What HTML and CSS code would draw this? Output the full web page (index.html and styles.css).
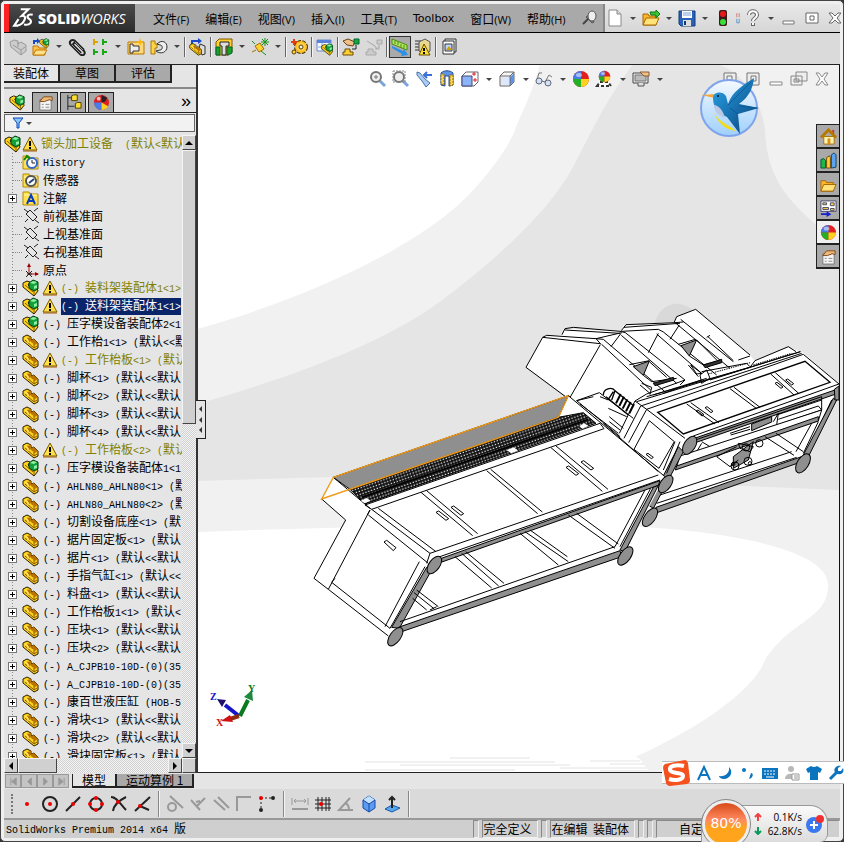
FILE: index.html
```html
<!DOCTYPE html>
<html lang="zh-CN">
<head>
    <meta charset="UTF-8">
    <meta name="viewport" content="width=device-width, initial-scale=1.0">
    <title>SolidWorks Premium 2014</title>
    <link rel="stylesheet" href="styles.css">
</head>
<body>
<!-- shared icons -->
<svg class="sprite" aria-hidden="true">
    <symbol id="part" viewBox="0 0 18 18"><path d="M1 4l4-2 4 2v3l3-1 4 4v5l-4 2L1 8z" fill="#ffd21c" stroke="#2b1d00"/><path d="M9 7l3-1 4 4-3 2-4-3zM5 5l4-1v4L7 9z" fill="#b87400"/><path d="M3 7l9 8v-4M12 15l3-2" fill="none" stroke="#8a5a00"/><path d="M3 5l3 2v3" fill="none" stroke="#fff39a"/></symbol>
    <symbol id="asm" viewBox="0 0 18 18"><path d="M1 4l4-2 3 1-2 3 4 4 5-1 1 3-4 5L1 8z" fill="#ffd21c" stroke="#2b1d00"/><path d="M3 6l8 7M12 16v-4" stroke="#8a5a00" fill="none"/><path d="M7 4l4-3 5 2v7l-4 2-5-3z" fill="#12a03c" stroke="#003d10"/><path d="M8 4l3-2 4 1-3 2zM12 7l3-1v3l-3 1z" fill="#8ff0a0"/></symbol>
    <symbol id="warn" viewBox="0 0 16 16"><path d="M8 1l7 13H1z" fill="#ffe04a" stroke="#7a5a00"/><path d="M7 5h2v5H7zM7 11h2v2H7z" fill="#000"/><path d="M1 15h14" stroke="#a55a00"/></symbol>
    <symbol id="folder" viewBox="0 0 18 18"><path d="M1 3h6l1 2h8v11H1z" fill="#ffe24d" stroke="#b88a00"/><path d="M2 6h13" stroke="#fff8b0"/></symbol>
    <symbol id="plane" viewBox="0 0 18 18"><path d="M8 3l7 7-4 4-7-7zM2 2l4 3M12 4l4-3M3 15l3-3M13 13l4 3" fill="none" stroke="#222"/></symbol>
    <symbol id="origin" viewBox="0 0 18 18"><path d="M7 14V4M7 13h9" stroke="#b01010" fill="none"/><path d="M5 6l2-4 2 4zM13 11l4 2-4 2z" fill="#900"/><path d="M4 10l6 6M10 10l-6 6M5 13h5" stroke="#222"/></symbol>
    <symbol id="ball" viewBox="0 0 18 18"><circle cx="9" cy="9" r="8" fill="#e02020"/><path d="M9 1a8 8 0 0 0-8 8h8z" fill="#4a7ce8"/><path d="M1 9a8 8 0 0 0 8 8V9z" fill="#24b024"/><path d="M9 17a8 8 0 0 0 8-8H9z" fill="#ffd020"/><ellipse cx="7" cy="5" rx="3" ry="2" fill="#fff" opacity=".5"/></symbol>
    <symbol id="hand" viewBox="0 0 18 18"><path d="M3 6h12v11H3z" fill="#f4f4f4" stroke="#777"/><path d="M5 11h2M9 11h4M5 14h2M9 14h4" stroke="#888"/><path d="M3 8l4-5h9v4l-3-1-5 2z" fill="#f2b878" stroke="#7a4a1a"/></symbol>
    <symbol id="open" viewBox="0 0 18 18"><path d="M1 5h5l1 2h7v9H1z" fill="#ffb62a" stroke="#a86600"/><path d="M1 16l3-7h13l-3 7z" fill="#ffe27a" stroke="#a86600"/></symbol>
    <symbol id="lens" viewBox="0 0 18 18"><path d="M11 11l5 5" stroke="#7ba4dc" stroke-width="3"/><circle cx="7" cy="7" r="5" fill="#eee" stroke="#777" stroke-width="2"/></symbol>
    <symbol id="cube" viewBox="0 0 18 18"><path d="M2 6l4-4h10v10l-4 4H2z" fill="#f7f7f7" stroke="#666"/><path d="M3 7h8v8H3z" fill="#dfe8fb"/><path d="M12 7l4-4v9l-4 3z" fill="#5c94ec"/><path d="M2 6h10v10M12 6l4-4" fill="none" stroke="#666"/></symbol>
</svg>

<div class="window">
    <header class="titlebar">
        <h1 class="brand">
            <svg class="ds" viewBox="0 0 22 20"><path d="M8 2h7l-6 6c6-1 2 8-4 9H2l4-6M19 7c-5-1-6 2-3 4s1 6-5 5" fill="none" stroke="#fff" stroke-width="2"/></svg>
            <b>SOLID</b><i>WORKS</i>
        </h1>
        <nav class="menu">
            <a href="#">文件<span>(F)</span></a>
            <a href="#">编辑<span>(E)</span></a>
            <a href="#">视图<span>(V)</span></a>
            <a href="#">插入<span>(I)</span></a>
            <a href="#">工具<span>(T)</span></a>
            <a href="#" class="latin">Toolbox</a>
            <a href="#">窗口<span>(W)</span></a>
            <a href="#">帮助<span>(H)</span></a>
            <svg class="pin" viewBox="0 0 16 16"><path d="M1 14l5-5" stroke="#444" stroke-width="2"/><path d="M4 7l6 6 2-1-1-3-4-4z" fill="#888" stroke="#555"/><ellipse cx="10" cy="6" rx="4" ry="5" fill="#eee" stroke="#555"/></svg>
        </nav>
        <div class="title-actions">
            <button class="tool" aria-label="New"><svg viewBox="0 0 18 18"><path d="M3 1h8l4 4v12H3z" fill="#fff" stroke="#888"/><path d="M11 1v4h4" fill="#ddd" stroke="#888"/></svg></button>
            <button class="drop" aria-label="New options"></button>
            <button class="tool" aria-label="Open"><svg viewBox="0 0 18 18"><use href="#open"/><path d="M8 3h6V1l4 4-4 4V6H9z" fill="#3cc43c" stroke="#0a7a0a"/></svg></button>
            <button class="drop" aria-label="Open options"></button>
            <button class="tool" aria-label="Save"><svg viewBox="0 0 18 18"><path d="M1 2h16v15H3l-2-2z" fill="#2a62b8" stroke="#123a7a"/><path d="M4 2h10v7H4z" fill="#fff"/><path d="M5 4h8M5 6h8" stroke="#7aa0dc"/><path d="M5 11h8v6H5z" fill="#ddd"/><path d="M6 12h2v4H6z" fill="#123a7a"/></svg></button>
            <button class="drop" aria-label="Save options"></button>
            <button class="tool" aria-label="Rebuild"><svg viewBox="0 0 18 18"><rect x="5" y="1" width="8" height="16" rx="2" fill="#3a1a1a"/><circle cx="9" cy="5" r="3" fill="#e81818"/><circle cx="9" cy="13" r="3" fill="#38e038"/></svg></button>
            <svg class="mini" viewBox="0 0 5 14"><path d="M1 1v5M4 1v5" stroke="#c66"/><path d="M1 8v5h3V8" fill="none" stroke="#48c"/></svg>
            <button class="tool" aria-label="Help"><svg viewBox="0 0 18 18"><path d="M5 6c0-5 8-5 8 0 0 3-4 3-4 6M9 14v3" fill="none" stroke="#666" stroke-width="4"/><path d="M5 6c0-5 8-5 8 0 0 3-4 3-4 6M9 14v2" fill="none" stroke="#fff" stroke-width="2"/></svg></button>
            <button class="drop" aria-label="Help options"></button>
            <button class="tool" aria-label="Minimize"><svg viewBox="0 0 18 18"><path d="M3 12h11v3H3z" fill="#fff" stroke="#777"/></svg></button>
            <button class="tool" aria-label="Restore"><svg viewBox="0 0 18 18"><path d="M3 4h12v10H3zM7 7h4v4H7z" fill="#fff" stroke="#666"/></svg></button>
            <button class="tool" aria-label="Close"><svg viewBox="0 0 18 18"><path d="M3 4h3l3 3 3-3h3l-4 5 4 5h-3l-3-3-3 3H3l4-5z" fill="#fff" stroke="#666"/></svg></button>
        </div>
    </header>

    <div class="toolbar">
        <button class="tool" aria-label="Edit component"><svg viewBox="0 0 18 18"><path d="M1 4l4-2 4 1v3l3-2 5 3v6l-5 4L2 9z" fill="#ccc" stroke="#999"/><path d="M4 7l8 5 4-3M9 4v5M12 12v4" stroke="#999" fill="none"/></svg></button>
        <button class="tool" aria-label="Insert component"><svg viewBox="0 0 18 18"><path d="M1 8h5l1 2h6v7H1z" fill="#ffc04a" stroke="#c07800"/><path d="M1 17l3-5h11l-3 5z" fill="#ffe08a" stroke="#c07800"/><path d="M2 6V3h4" stroke="#1a4ac8" stroke-width="2" fill="none"/><path d="M5 0l3 3-3 3z" fill="#1a4ac8"/><use href="#asm" x="7" y="0" width="11" height="11"/></svg></button>
        <button class="drop" aria-label="Insert options"></button>
        <button class="tool" aria-label="Mate"><svg viewBox="0 0 18 18"><path d="M16 12L7 3C4 0 0 4 3 7l9 9c3 3 6 0 4-3L8 5C6 4 4 6 6 8l7 7" fill="none" stroke="#222" stroke-width="2"/><path d="M15 12L7 4M4 7l9 9" stroke="#999"/></svg></button>
        <button class="tool" aria-label="Linear pattern"><svg viewBox="0 0 18 18"><g fill="none" stroke-width="2"><path d="M3 1v6M3 4h4" stroke="#d8a800"/><path d="M3 11v6M3 14h4M12 1v6M12 4h4M12 11v6M12 14h4" stroke="#18a818"/></g></svg></button>
        <button class="drop" aria-label="Pattern options"></button>
        <button class="tool" aria-label="Smart fasteners"><svg viewBox="0 0 18 18"><path d="M1 4h16v12H1z" fill="#ffd878" stroke="#b87800"/><path d="M3 6h3v2h6v5H6v2H3z" fill="#eee" stroke="#333"/><path d="M13 0l1 3 3 1-3 1-1 3-1-3-3-1 3-1z" fill="#ffb800"/></svg></button>
        <button class="tool" aria-label="Move component"><svg viewBox="0 0 18 18"><path d="M1 3h4v3h2v4H5v6H1z" fill="#ffd44a" stroke="#a87800"/><path d="M7 6c5-5 10-2 10 3s-6 8-11 4l4-1c3 0 3-5 0-5z" fill="#eee" stroke="#333"/></svg></button>
        <button class="drop" aria-label="Move options"></button>
        <div class="sep"></div>
        <button class="tool" aria-label="Show hidden components"><svg viewBox="0 0 18 18"><path d="M3 6V3h7" stroke="#1a4ac8" stroke-width="2" fill="none"/><path d="M9 0l4 3-4 3z" fill="#1a4ac8"/><path d="M11 6l5 2v8l-3 1-3-5z" fill="#ddd" stroke="#333"/><use href="#part" x="0" y="4" width="14" height="14"/></svg></button>
        <div class="sep"></div>
        <button class="tool" aria-label="Assembly features"><svg viewBox="0 0 18 18"><path d="M1 4l3-3h13v13l-4 3H1z" fill="#ffd030" stroke="#7a5a00"/><path d="M1 9h4v8H1zM12 9h5v6l-4 2h-1z" fill="#18a028" stroke="#063"/><path d="M5 4h9v4h-3v9H7V8H5z" fill="#ddd" stroke="#222"/></svg></button>
        <button class="drop" aria-label="Feature options"></button>
        <button class="tool" aria-label="Reference geometry"><svg viewBox="0 0 18 18"><path d="M4 8l5-3 4 6-5 3z" fill="#ffd030" stroke="#a07000"/><path d="M1 3l3 3M10 13l5 4" stroke="#169016"/><path d="M14 0v8M10 4h8M11 1l6 6M17 1l-6 6" stroke="#169016"/><path d="M1 14l4-2" stroke="#a07000"/></svg></button>
        <button class="drop" aria-label="Reference options"></button>
        <div class="sep"></div>
        <button class="tool" aria-label="New motion study"><svg viewBox="0 0 18 18"><circle cx="11" cy="9" r="5" fill="none" stroke="#4a3400" stroke-width="4" stroke-dasharray="3 1"/><circle cx="11" cy="9" r="5" fill="#ffd050" stroke="#ffc020" stroke-width="2"/><circle cx="11" cy="9" r="2" fill="#eee" stroke="#5a4000"/><circle cx="4" cy="14" r="2" fill="#ffd030" stroke="#5a4000"/><path d="M1 4h6M4 1v6" stroke="#e04010" stroke-width="2"/></svg></button>
        <div class="sep"></div>
        <button class="tool" aria-label="Bill of materials"><svg viewBox="0 0 18 18"><path d="M1 2h14v11H1z" fill="#f4f8ff" stroke="#6a8ad0"/><path d="M1 2h14v3H1z" fill="#5a82dc"/><path d="M2 9h12M6 5v8" stroke="#8aa4dc"/><use href="#asm" x="5" y="5" width="13" height="13"/></svg></button>
        <div class="sep"></div>
        <button class="tool" aria-label="Exploded view"><svg viewBox="0 0 18 18"><path d="M1 3l5-2 7 3-2 4-6-1z" fill="#f0c088" stroke="#6a4010"/><path d="M12 1h5v5h-5z" fill="#18a838" stroke="#063"/><path d="M3 11h5v3h3v3H1v-3h2z" fill="#ffd030" stroke="#6a4a00"/><path d="M14 7v4h-4" fill="none" stroke="#222"/></svg></button>
        <button class="tool" aria-label="Explode line sketch"><svg viewBox="0 0 18 18"><path d="M2 3l8 5 2 3M12 2h5v4h-5zM3 11h5v3h3v3H1v-3h2zM14 7v4h-4" fill="#ccc" stroke="#aaa"/></svg></button>
        <div class="sep"></div>
        <button class="tool pressed" aria-label="Instant3D"><svg viewBox="0 0 18 18"><path d="M1 1l15 6v5L1 6z" fill="#b4e860" stroke="#4a8a10"/><path d="M4 3v3M7 4v3M10 6v3M13 7v3" stroke="#4a8a10"/><path d="M1 8l11 5 1-2 4 6-7 1 1-2L1 10z" fill="#2a90e8"/></svg></button>
        <button class="tool" aria-label="Large assembly mode"><svg viewBox="0 0 18 18"><path d="M1 3h6M1 6h6M1 9h6M1 12h6" stroke="#333"/><path d="M5 4l6-3 5 3v9l-5 3-6-3z" fill="#e8d890" stroke="#555"/><path d="M10 6l6 11H5z" fill="#ffe030" stroke="#6a5000"/><path d="M10 10v3M10 14v2" stroke="#000" stroke-width="2"/></svg></button>
        <div class="sep"></div>
        <button class="tool" aria-label="Update holders"><svg viewBox="0 0 18 18"><path d="M5 1h11v13H5z" fill="#eee" stroke="#333"/><path d="M3 3h11v13H3z" fill="#fff" stroke="#333"/><path d="M5 6h7v7H5z" fill="#bcd4ff" stroke="#333"/><path d="M6 12l3-4 3 4z" fill="#d0a000"/></svg></button>
    </div>

    <main class="workspace">
        <aside class="panel">
            <div class="command-tabs">
                <button class="active">装配体</button>
                <button>草图</button>
                <button>评估</button>
            </div>
            <div class="manager-tabs">
                <button class="active" aria-label="FeatureManager"><svg viewBox="0 0 18 18"><use href="#asm"/></svg></button>
                <button aria-label="PropertyManager"><svg viewBox="0 0 18 18"><use href="#hand"/></svg></button>
                <button aria-label="ConfigurationManager"><svg viewBox="0 0 18 18"><path d="M3 1v16M3 4h4M3 13h7" stroke="#222" fill="none"/><path d="M7 2l2-1h4v6H7zM11 10l2-1h4v6h-6z" fill="#ffe030" stroke="#4a3a00"/></svg></button>
                <button aria-label="DisplayManager"><svg viewBox="0 0 18 18"><circle cx="9" cy="9" r="8" fill="#e02020"/><path d="M9 1l6 3-2 4-4 1z" fill="#222"/><path d="M1 9a8 8 0 0 0 8 8V9z" fill="#4a7ce8"/><path d="M9 17a8 8 0 0 0 7-4l-7-4z" fill="#ffd020"/><ellipse cx="6" cy="5" rx="2" ry="2" fill="#fff" opacity=".7"/></svg></button>
                <span class="more">»</span>
            </div>
            <label class="filter">
                <svg viewBox="0 0 12 12"><path d="M1 1h10L7 6v5H5V6z" fill="#8cc4f8" stroke="#0a48b8"/></svg>
                <span class="caret"></span>
                <input type="text" aria-label="Filter">
            </label>
            <div class="tree-frame">
                <div class="tree">
                    <div class="row root"><svg><use href="#asm"/></svg><svg class="warn"><use href="#warn"/></svg><a class="label olive" href="#">锁头加工设备<span>  (</span>默认<span>&lt;</span>默认</a></div>
                    <div class="children">
                        <div class="row"><em></em><svg viewBox="0 0 18 18"><use href="#folder"/><circle cx="10" cy="10" r="5" fill="#fff" stroke="#36c" stroke-width="2"/><path d="M10 7v3h3" stroke="#222" fill="none"/><path d="M2 7l3-4 3 3" stroke="#180" stroke-width="2" fill="none"/></svg><a class="label" href="#"><span>History</span></a></div>
                        <div class="row"><em></em><svg viewBox="0 0 18 18"><use href="#folder"/><circle cx="9" cy="10" r="5" fill="#fff" stroke="#555" stroke-width="2"/><path d="M7 12l5-4" stroke="#247" stroke-width="2"/></svg><a class="label" href="#">传感器</a></div>
                        <div class="row"><button></button><svg viewBox="0 0 18 18"><use href="#folder"/><path d="M5 15l4-9 4 9M6 12h6" fill="none" stroke="#0a3cc0" stroke-width="2"/></svg><a class="label" href="#">注解</a></div>
                        <div class="row"><em></em><svg><use href="#plane"/></svg><a class="label" href="#">前视基准面</a></div>
                        <div class="row"><em></em><svg><use href="#plane"/></svg><a class="label" href="#">上视基准面</a></div>
                        <div class="row"><em></em><svg><use href="#plane"/></svg><a class="label" href="#">右视基准面</a></div>
                        <div class="row"><em></em><svg><use href="#origin"/></svg><a class="label" href="#">原点</a></div>
                        <div class="row"><button></button><svg><use href="#asm"/></svg><svg class="warn"><use href="#warn"/></svg><a class="label olive" href="#"><span>(-) </span>装料架装配体<span>1&lt;1&gt;</span></a></div>
                        <div class="row"><button></button><svg><use href="#asm"/></svg><svg class="warn"><use href="#warn"/></svg><a class="label selected" href="#"><span>(-) </span>送料架装配体<span>1&lt;1&gt;</span></a></div>
                        <div class="row"><button></button><svg><use href="#asm"/></svg><a class="label" href="#"><span>(-) </span>压字模设备装配体<span>2&lt;1</span></a></div>
                        <div class="row"><button></button><svg><use href="#part"/></svg><a class="label" href="#"><span>(-) </span>工作枱<span>1&lt;1&gt; (</span>默认<span>&lt;&lt;</span>默</a></div>
                        <div class="row"><button></button><svg><use href="#part"/></svg><svg class="warn"><use href="#warn"/></svg><a class="label olive" href="#"><span>(-) </span>工作枱板<span>&lt;1&gt; (</span>默认</a></div>
                        <div class="row"><button></button><svg><use href="#part"/></svg><a class="label" href="#"><span>(-) </span>脚杯<span>&lt;1&gt; (</span>默认<span>&lt;&lt;</span>默认</a></div>
                        <div class="row"><button></button><svg><use href="#part"/></svg><a class="label" href="#"><span>(-) </span>脚杯<span>&lt;2&gt; (</span>默认<span>&lt;&lt;</span>默认</a></div>
                        <div class="row"><button></button><svg><use href="#part"/></svg><a class="label" href="#"><span>(-) </span>脚杯<span>&lt;3&gt; (</span>默认<span>&lt;&lt;</span>默认</a></div>
                        <div class="row"><button></button><svg><use href="#part"/></svg><a class="label" href="#"><span>(-) </span>脚杯<span>&lt;4&gt; (</span>默认<span>&lt;&lt;</span>默认</a></div>
                        <div class="row"><button></button><svg><use href="#part"/></svg><svg class="warn"><use href="#warn"/></svg><a class="label olive" href="#"><span>(-) </span>工作枱板<span>&lt;2&gt; (</span>默认</a></div>
                        <div class="row"><button></button><svg><use href="#asm"/></svg><a class="label" href="#"><span>(-) </span>压字模设备装配体<span>1&lt;1</span></a></div>
                        <div class="row"><button></button><svg><use href="#part"/></svg><a class="label" href="#"><span>(-) AHLN80_AHLN80&lt;1&gt; (</span>默</a></div>
                        <div class="row"><button></button><svg><use href="#part"/></svg><a class="label" href="#"><span>(-) AHLN80_AHLN80&lt;2&gt; (</span>默</a></div>
                        <div class="row"><button></button><svg><use href="#part"/></svg><a class="label" href="#"><span>(-) </span>切割设备底座<span>&lt;1&gt; (</span>默</a></div>
                        <div class="row"><button></button><svg><use href="#part"/></svg><a class="label" href="#"><span>(-) </span>据片固定板<span>&lt;1&gt; (</span>默认</a></div>
                        <div class="row"><button></button><svg><use href="#part"/></svg><a class="label" href="#"><span>(-) </span>据片<span>&lt;1&gt; (</span>默认<span>&lt;&lt;</span>默认</a></div>
                        <div class="row"><button></button><svg><use href="#part"/></svg><a class="label" href="#"><span>(-) </span>手指气缸<span>&lt;1&gt; (</span>默认<span>&lt;&lt;</span></a></div>
                        <div class="row"><button></button><svg><use href="#part"/></svg><a class="label" href="#"><span>(-) </span>料盘<span>&lt;1&gt; (</span>默认<span>&lt;&lt;</span>默认</a></div>
                        <div class="row"><button></button><svg><use href="#part"/></svg><a class="label" href="#"><span>(-) </span>工作枱板<span>1&lt;1&gt; (</span>默认<span>&lt;</span></a></div>
                        <div class="row"><button></button><svg><use href="#part"/></svg><a class="label" href="#"><span>(-) </span>压块<span>&lt;1&gt; (</span>默认<span>&lt;&lt;</span>默认</a></div>
                        <div class="row"><button></button><svg><use href="#part"/></svg><a class="label" href="#"><span>(-) </span>压块<span>&lt;2&gt; (</span>默认<span>&lt;&lt;</span>默认</a></div>
                        <div class="row"><button></button><svg><use href="#part"/></svg><a class="label" href="#"><span>(-) A_CJPB10-10D-(0)(35</span></a></div>
                        <div class="row"><button></button><svg><use href="#part"/></svg><a class="label" href="#"><span>(-) A_CJPB10-10D-(0)(35</span></a></div>
                        <div class="row"><button></button><svg><use href="#part"/></svg><a class="label" href="#"><span>(-) </span>康百世液压缸<span> (HOB-5</span></a></div>
                        <div class="row"><button></button><svg><use href="#part"/></svg><a class="label" href="#"><span>(-) </span>滑块<span>&lt;1&gt; (</span>默认<span>&lt;&lt;</span>默认</a></div>
                        <div class="row"><button></button><svg><use href="#part"/></svg><a class="label" href="#"><span>(-) </span>滑块<span>&lt;2&gt; (</span>默认<span>&lt;&lt;</span>默认</a></div>
                        <div class="row"><button></button><svg><use href="#part"/></svg><a class="label" href="#"><span>(-) </span>滑块固定板<span>&lt;1&gt; (</span>默认</a></div>
                    </div>
                </div>
                <div class="vscroll"><button class="up" aria-label="Scroll up"></button><div class="thumb"></div><div class="track"></div><button class="down" aria-label="Scroll down"></button></div>
                <div class="hscroll"><button class="left" aria-label="Scroll left"></button><div class="thumb"></div><div class="track"></div><button class="right" aria-label="Scroll right"></button></div>
                <div class="corner"></div>
            </div>
        </aside>

        <section class="viewport">
            <svg class="scene" viewBox="198 65 641 708" preserveAspectRatio="xMinYMin slice">
                <defs>
                    <pattern id="rollers" width="9" height="9" patternUnits="userSpaceOnUse" patternTransform="rotate(-19)"><path d="M0 0h9v9H0z" fill="#111"/><path d="M2 2h4v4H2z" fill="#eee"/></pattern>
                </defs>
                <!-- backdrop bands -->
                <path d="M197 64h644v711H197z" fill="#fff"/>
                <path d="M197 329C322 294 404 248 445 216S512 140 515 130 530 100 540 64H841V775H652C640 760 640 757 635 757 700 728 754 690 765 660 790 620 828 620 828 585 828 545 703 530 640 527L363 527Q280 529 197 532z" fill="#f1f1f1"/>
                <path d="M197 404C300 375 390 340 445 298S550 210 573 167 600 110 633 64H718C750 76 763 110 765 130 767 190 800 210 841 246V490L743 486 332 477 197 481z" fill="#e5e5e5"/>
                <path d="M653 330C658 295 694 295 706 330z" fill="#d9d9d9"/>
                <path d="M365 762h190M400 765h170M450 758h80M365 770h150M500 774h80M560 768h90M590 761h50M610 764h50M600 771h50" stroke="#f1f1f1" stroke-width="2"/>
                <!-- rear machine and cabinet -->
                <g transform="translate(520 300) scale(.33333)" fill="none" stroke="#000" stroke-width="3">
                    <path d="M18 202L68 110 126 104 132 86 303 94 312 74 462 66 470 50 527 28 690 165 703 182 805 142 850 158 957 252 850 480 405 640 300 405 150 296z" fill="#fff" stroke="none"/>
                    <path d="M18 202L68 112 80 106 228 116 250 118M68 112L240 131M241 134L148 296M18 202L150 300"/>
                    <path d="M250 118L435 275M245 133L392 270M228 116L243 133M228 116L305 98"/>
                    <path d="M126 104L135 86 160 82 300 94 316 98M135 90L300 100M303 100L273 140M316 98L495 240M304 106L470 250"/>
                    <path d="M304 92L318 74 465 68 490 66M312 82L480 70M305 94L415 88 430 96M415 100L385 158M430 96L590 225M410 102L545 220" />
                    <path d="M463 66L470 50 527 28 690 165M463 66L630 205M482 58L640 185M478 75L450 118M560 112L570 106M564 110L640 182M655 180L690 168"/>
                    <path d="M340 200L388 183 370 226zM483 137L530 120 508 168z" fill="#8f8f8f"/>
                    <path d="M328 194L388 182M475 133L526 118M370 226L395 245 470 235M508 168L550 195 605 180M388 185L440 232M530 120L590 180"/>
                    <path d="M400 250L460 232 462 240 405 257zM550 195L605 178 605 188 555 203z" fill="#333"/>
                    <path d="M360 255L390 280M365 250L395 262 390 284M505 195L535 230M512 195L545 220 530 222zM540 225L560 210 570 235 545 250zM495 240L480 255M545 215L680 190 690 200"/>
                    <path d="M345 303L380 282 495 240M380 290L690 202 705 182 805 140 828 155M430 280L545 240M570 240L840 155M400 285L560 235"/>
                    <path d="M565 222L690 188M700 195L815 160" stroke-dasharray="4 3"/>
                    <path d="M380 328L850 163 957 252 520 408M380 328L495 415M350 305L842 155M362 318L845 160M345 303L380 328"/>
                    <path d="M413 337L855 184 930 247 490 402z" stroke-width="4"/>
                    <path d="M500 312L585 372M512 308L597 368M630 266L710 326M642 262L720 322M752 222L822 285M766 218L836 280"/>
                    <path d="M528 333l6-3 18 14-6 4zM555 323l6-3 18 14-6 4zM765 250l6-3 18 14-6 4zM797 240l6-3 18 14-6 4z"/>
                    <path d="M345 303L298 400M362 318L312 415M380 328L326 428M388 362L463 425 417 505 342 448zM378 463l6-3 16 12-6 4z"/>
                    <path d="M523 415L945 270 948 282 526 428z" fill="#8f8f8f"/>
                    <path d="M520 422L905 290 905 330 545 450M545 430L530 455M545 425L570 440M760 365L775 340 770 375M775 358L895 318 905 330M770 345L905 300"/>
                    <path d="M480 468L905 330 895 362 470 500z" fill="#fff"/>
                    <path d="M470 498L895 350V363L466 510z" fill="#8f8f8f"/>
                    <path d="M695 372L755 350 755 366 695 392zM640 470L700 425 685 480 640 505z" fill="#8f8f8f"/>
                    <path d="M590 470L630 500 655 480M590 470L650 440M630 400L690 380M632 405L690 388M655 430L700 440 690 455 660 445z"/>
                    <circle cx="645" cy="498" r="12"/><circle cx="684" cy="484" r="12"/><circle cx="678" cy="442" r="11"/><circle cx="718" cy="430" r="11"/><circle cx="640" cy="492" r="5"/><circle cx="690" cy="490" r="5"/>
                    <path d="M735 410L822 466M768 400L850 455M420 585L815 455M410 610L830 472M895 365L850 460M875 370L828 455M935 300L895 385"/>
                    <path d="M408 622L845 470 840 487 405 640zM940 295L950 300 865 470 850 465zM475 440L490 455 400 625 385 615z" fill="#8f8f8f"/>
                    <path d="M480 425L440 520M465 425L430 510"/>
                    <path d="M943 268L957 258V300L945 300z" fill="#8f8f8f"/>
                    <ellipse cx="509" cy="436" rx="17" ry="30" transform="rotate(32 509 436)" fill="#8f8f8f"/>
                    <ellipse cx="849" cy="490" rx="17" ry="32" transform="rotate(32 849 490)" fill="#8f8f8f"/>
                    <path d="M170 302L238 278 340 355M170 302L300 410M180 312L295 400M240 290L265 300M265 325L320 350M268 365L300 390M268 350L310 385"/>
                    <path d="M250 285C250 265 275 260 285 272L338 315M258 290L325 345M265 298L280 275M285 272L275 300" stroke-width="4"/>
                    <path d="M288 310L302 282M298 318L312 290M308 326L322 298M318 334L332 306M328 340L342 312" stroke-width="6"/>
                </g>
                <!-- front bench -->
                <g transform="translate(310 380) scale(.33333)" fill="none" stroke="#000" stroke-width="3">
                    <path d="M35 357L70 292 775 47 880 130 1065 290 940 525 240 770 55 628 12 595 107 420z" fill="#fff" stroke="none"/>
                    <path d="M35 357L107 420 12 595 55 628 180 390M70 292L180 385"/>
                    <path d="M120 328L745 112 820 98 858 130 165 372z" fill="url(#rollers)"/>
                    <path d="M155 352L835 118" stroke-width="5"/>
                    <path d="M590 210l22-8 12 10-20 8zM808 138l15-8 12 8-18 8zM152 362l18-8 12 8-18 8z" fill="#fff" stroke="none"/>
                    <path d="M70 292L775 47 745 112 120 328z" fill="#8f8f8f"/>
                    <path d="M70 292L775 47 745 112 35 357z" stroke="#f09a18" stroke-width="4"/>
                    <path d="M165 375L870 130 882 146 185 388zM775 47L1065 290M800 62L850 50M880 130L1045 275"/>
                    <path d="M185 388L360 520M205 385L378 515M175 405L355 550M180 390L172 405"/>
                    <path d="M360 520L1045 285M375 535L1050 300M360 520L350 550"/>
                    <path d="M380 540L1050 302 1045 316 390 548z" fill="#8f8f8f"/>
                    <path d="M333 337L488 467M350 332L503 461M530 272L683 401M542 268L697 396M723 203L877 334M738 198L894 328"/>
                    <path d="M378 397l8-4 30 23-8 5zM423 382l8-4 30 23-8 5zM768 262l8-4 30 23-8 5zM813 246l8-4 30 23-8 5zM222 486l8-5 28 22-8 9z"/>
                    <path d="M65 607L240 745M55 628L235 768M328 545L225 740M345 560L240 745M65 607L75 595"/>
                    <path d="M350 562L362 575 268 745 245 742z" fill="#8f8f8f"/>
                    <path d="M270 725L915 500M320 630L385 680M312 638L372 686M308 655L350 690M467 515L582 610M455 520L566 618M435 530L545 624M645 455L775 545M660 450L772 530M630 460L745 555M775 405L915 505M800 400L925 492M380 680L360 690"/>
                    <path d="M265 742L930 512 935 530 272 756z" fill="#8f8f8f"/>
                    <path d="M1005 330L915 500M1022 325L930 500"/>
                    <path d="M1030 322L1045 316 945 515 930 510z" fill="#8f8f8f"/>
                    <g fill="#8f8f8f">
                        <ellipse cx="373" cy="555" rx="16" ry="30" transform="rotate(36 373 555)"/>
                        <ellipse cx="256" cy="770" rx="16" ry="32" transform="rotate(36 256 770)"/>
                        <ellipse cx="946" cy="528" rx="16" ry="32" transform="rotate(36 946 528)"/>
                        <ellipse cx="1067" cy="312" rx="16" ry="30" transform="rotate(36 1067 312)"/>
                        <ellipse cx="1020" cy="412" rx="16" ry="32" transform="rotate(36 1020 412)"/>
                    </g>
                </g>
                <!-- axis triad -->
                <g stroke-width="4" class="triad">
                    <path d="M239 716L225 705" stroke="#1414c8"/><path d="M217 699l9 1-4 7z" fill="#20106a"/>
                    <path d="M240 716L248 700" stroke="#0a7a20"/><path d="M252 690l1 11-9-4z" fill="#1e8a40"/>
                    <path d="M239 716L230 719" stroke="#8a3010"/><path d="M221 721l9-6 3 7z" fill="#d01010"/>
                    <text x="210" y="700" fill="#1414c8">Z</text><text x="248" y="692" fill="#0a7a20">Y</text><text x="216" y="726" fill="#d01010">X</text>
                </g>
            </svg>

            <div class="view-tools">
                <button class="tool" aria-label="Zoom to fit"><svg viewBox="0 0 18 18"><use href="#lens"/><path d="M5 7h4M7 5v4" stroke="#777"/></svg></button>
                <button class="tool" aria-label="Zoom to area"><svg viewBox="0 0 18 18"><use href="#lens"/><path d="M1 1h12v11H1z" fill="none" stroke="#888" stroke-dasharray="2 1"/></svg></button>
                <button class="tool" aria-label="Previous view"><svg viewBox="0 0 18 18"><path d="M2 2l3 1 5 6 5 4-4 4-4-6-5-6z" fill="#a8ccf4" stroke="#4a72a8"/><path d="M9 5h8M12 2L9 5l3 3" fill="none" stroke="#3a70d8" stroke-width="2"/></svg></button>
                <button class="tool" aria-label="Section view"><svg viewBox="0 0 18 18"><path d="M3 3c3-3 9-3 12 0v12l-4 1V6H7v10l-4-1z" fill="#5c94ec" stroke="#2a4a88"/><path d="M3 4h3v11l-3-1zM12 5h3v10l-3 1z" fill="#ffd850" stroke="#8a6a10" stroke-dasharray="2 1"/></svg></button>
                <button class="tool" aria-label="View orientation"><svg viewBox="0 0 18 18"><path d="M1 6l4-4h12v10l-4 4H1z" fill="#fff" stroke="#667"/><path d="M1 6h10v10H1z" fill="#8cb4f8" stroke="#447"/><path d="M11 4h4M13 2v4M12 10h4M14 8v4" stroke="#e02020"/></svg></button>
                <button class="drop" aria-label="Orientation options"></button>
                <button class="tool" aria-label="Display style"><svg viewBox="0 0 18 18"><use href="#cube"/></svg></button>
                <button class="drop" aria-label="Display options"></button>
                <button class="tool" aria-label="Hide items"><svg viewBox="0 0 18 18"><path d="M2 10L4 3h3M10 12l4-7 3 2" fill="none" stroke="#777"/><circle cx="4" cy="11" r="3" fill="#cfe2f8" stroke="#667"/><circle cx="13" cy="13" r="3" fill="#cfe2f8" stroke="#667"/><path d="M7 11l3 1" stroke="#667"/></svg></button>
                <button class="drop" aria-label="Hide options"></button>
                <button class="tool" aria-label="Edit appearance"><svg viewBox="0 0 18 18"><use href="#ball"/></svg></button>
                <button class="tool" aria-label="Apply scene"><svg viewBox="0 0 18 18"><path d="M2 16l3-4h8l3 4z" fill="#fff" stroke="#333" stroke-dasharray="3 2" stroke-width="2"/><use href="#ball" x="3" y="0" width="13" height="13"/></svg></button>
                <button class="drop" aria-label="Scene options"></button>
                <button class="tool" aria-label="View settings"><svg viewBox="0 0 18 18"><path d="M1 3h15v10H1z" fill="#eee" stroke="#444"/><path d="M3 5h11v6H3z" fill="#bbb" stroke="#777"/><path d="M6 13v3h6v-3" fill="#ddd" stroke="#555"/><path d="M8 2h9v4h-5z" fill="#f2c090" stroke="#8a5a2a"/></svg></button>
                <button class="drop" aria-label="Settings options"></button>
            </div>

            <div class="doc-buttons">
                <button class="tool" aria-label="Tile left"><svg viewBox="0 0 18 18"><path d="M3 3h12v12H3zM6 10V6h5v5z" fill="#eee" stroke="#777"/></svg></button>
                <button class="tool" aria-label="Tile right"><svg viewBox="0 0 18 18"><path d="M3 3h12v12H3zM7 6h5v5H7z" fill="#eee" stroke="#777"/></svg></button>
                <button class="tool" aria-label="Minimize document"><svg viewBox="0 0 18 18"><path d="M3 12h12v3H3z" fill="#fff" stroke="#888"/></svg></button>
                <button class="tool" aria-label="Restore document"><svg viewBox="0 0 18 18"><path d="M6 2h11v9H6zM1 6h11v9H1zM4 9h5v3H4z" fill="#eee" stroke="#888"/></svg></button>
                <button class="tool" aria-label="Close document"><svg viewBox="0 0 18 18"><path d="M3 3h3l3 4 3-4h3l-4 6 4 6h-3l-3-4-3 4H3l4-6z" fill="#fff" stroke="#888"/></svg></button>
            </div>

            <svg class="bird" viewBox="0 0 66 64">
                <defs><linearGradient id="sky" x2="0" y2="1"><stop offset="0" stop-color="#f4f9ff"/><stop offset="1" stop-color="#9fd0fc"/></linearGradient><linearGradient id="wing" x2="1" y2="1"><stop offset="0" stop-color="#2aa4e8"/><stop offset="1" stop-color="#063f78"/></linearGradient></defs>
                <circle cx="32" cy="34" r="28" fill="url(#sky)" stroke="#7fa4ec" stroke-width="2"/>
                <path d="M4 21l14-1v4z" fill="#f4a640"/>
                <path d="M16 24c0-6 9-8 13-2l2 8C35 18 46 11 57 4c-1 10-5 19-15 26l20 4-21 6 2 20L30 43C20 39 16 32 16 24z" fill="url(#wing)"/>
                <path d="M17 31c4 0 9 5 11 13-6-2-11-6-11-13z" fill="#bcc8e4"/>
                <path d="M17 38c4 10 14 12 22 19-10-1-19-8-22-19z" fill="#f2dc18"/>
                <circle cx="21" cy="22" r="1" fill="#012"/>
                <path d="M31 31L54 8M42 32l18 2M41 40l-8-6" fill="none" stroke="#0a5c9c"/>
            </svg>

            <nav class="task-tabs">
                <button aria-label="Resources"><svg viewBox="0 0 18 18"><path d="M13 2h2v5h-2z" fill="#c33"/><path d="M4 9h11v8H4z" fill="#fff2b0" stroke="#a87000"/><path d="M1 10l8-8 8 8" fill="none" stroke="#b87800" stroke-width="3"/><path d="M8 11h3v6H8z" fill="#d89018"/></svg></button>
                <button aria-label="Design library"><svg viewBox="0 0 18 18"><path d="M1 8l3-1 2 2v8H1z" fill="#1cb848" stroke="#053"/><path d="M7 6l3-2 1 2v11H7z" fill="#ffd030" stroke="#740"/><path d="M12 3l3-2 2 2v13l-5 1z" fill="#5ca4f0" stroke="#146"/></svg></button>
                <button aria-label="File explorer"><svg viewBox="0 0 18 18"><use href="#open"/></svg></button>
                <button aria-label="View palette"><svg viewBox="0 0 18 18"><path d="M1 1h16v11H1z" fill="#fff" stroke="#446"/><path d="M3 3h4v2H3zM11 3h4v3h-4zM3 8h6v2H3zM11 9h4v2h-4z" fill="#ffd84a" stroke="#446"/><path d="M1 14h6v-2l5 3-5 3v-2H1z" fill="#1420d0"/></svg></button>
                <button class="active" aria-label="Appearances"><svg viewBox="0 0 18 18"><use href="#ball"/></svg></button>
                <button aria-label="Custom properties"><svg viewBox="0 0 18 18"><use href="#hand"/></svg></button>
            </nav>
            <button class="splitter" aria-label="Collapse panel"><i></i><i></i><i></i></button>
        </section>
    </main>

    <div class="model-tabs">
        <button class="step" aria-label="First"><svg viewBox="0 0 10 10"><path d="M2 1v8M8 1v8L3 5z"/></svg></button>
        <button class="step" aria-label="Previous"><svg viewBox="0 0 10 10"><path d="M7 1v8L3 5z"/></svg></button>
        <button class="step" aria-label="Next"><svg viewBox="0 0 10 10"><path d="M3 1v8l4-4z"/></svg></button>
        <button class="step" aria-label="Last"><svg viewBox="0 0 10 10"><path d="M8 1v8M2 1v8l5-4z"/></svg></button>
        <button class="tab active">模型</button>
        <button class="tab">运动算例 1</button>
    </div>

    <div class="sketchbar">
        <span class="grip"></span>
        <button class="tool" aria-label="Point snap"><svg viewBox="0 0 18 18"><circle cx="9" cy="9" r="2" fill="#e00"/></svg></button>
        <button class="tool" aria-label="Center snap"><svg viewBox="0 0 18 18"><circle cx="9" cy="9" r="7" fill="none" stroke="#222" stroke-width="2"/><circle cx="9" cy="9" r="2" fill="#e00"/></svg></button>
        <button class="tool" aria-label="Midpoint snap"><svg viewBox="0 0 18 18"><path d="M2 16L16 2" stroke="#222" stroke-width="2"/><circle cx="9" cy="9" r="2" fill="#e00"/></svg></button>
        <button class="tool" aria-label="Quadrant snap"><svg viewBox="0 0 18 18"><circle cx="9" cy="9" r="6" fill="none" stroke="#222" stroke-width="2"/><g fill="#e00"><circle cx="9" cy="3" r="2"/><circle cx="9" cy="15" r="2"/><circle cx="3" cy="9" r="2"/><circle cx="15" cy="9" r="2"/></g></svg></button>
        <button class="tool" aria-label="Intersection snap"><svg viewBox="0 0 18 18"><path d="M1 2c6 0 9 7 15 13M16 2C12 4 4 9 3 16" fill="none" stroke="#222" stroke-width="2"/><circle cx="8" cy="7" r="2" fill="#e00"/></svg></button>
        <button class="tool" aria-label="Nearest snap"><svg viewBox="0 0 18 18"><path d="M2 16L17 2M7 11l9 4" stroke="#222" stroke-width="2"/><circle cx="7" cy="11" r="2" fill="#e00"/></svg></button>
        <div class="sep"></div>
        <button class="tool" aria-label="Tangent snap"><svg viewBox="0 0 18 18"><path d="M4 1l13 12" stroke="#999" stroke-width="2"/><circle cx="6" cy="12" r="4" fill="none" stroke="#999" stroke-width="2"/></svg></button>
        <button class="tool" aria-label="Perpendicular snap"><svg viewBox="0 0 18 18"><path d="M2 5l9 10M16 3l-8 8M7 7l4-1" fill="none" stroke="#999" stroke-width="2"/></svg></button>
        <button class="tool" aria-label="Parallel snap"><svg viewBox="0 0 18 18"><path d="M2 5l11 10M6 2l11 11" stroke="#999" stroke-width="2"/></svg></button>
        <button class="tool" aria-label="Corner snap"><svg viewBox="0 0 18 18"><path d="M2 16V2h14" fill="none" stroke="#999" stroke-width="2"/></svg></button>
        <button class="tool" aria-label="Length snap"><svg viewBox="0 0 18 18"><path d="M3 3h12M3 3v12" fill="none" stroke="#222" stroke-dasharray="2 2"/><circle cx="3" cy="3" r="2" fill="#e00"/><circle cx="15" cy="3" r="2" fill="#222"/><circle cx="3" cy="15" r="2" fill="#222"/></svg></button>
        <div class="sep"></div>
        <button class="tool" aria-label="Dimension snap"><svg viewBox="0 0 18 18"><path d="M1 10V3M17 10V3M3 6h12M5 4L3 6l2 2M13 4l2 2-2 2" fill="none" stroke="#999"/><path d="M1 14h16" stroke="#999" stroke-width="2"/></svg></button>
        <button class="tool" aria-label="Grid snap"><svg viewBox="0 0 18 18"><path d="M1 5h16M1 9h16M1 13h16M4 2v14M8 2v14M12 2v14M15 2v14" stroke="#222"/><circle cx="7" cy="9" r="2" fill="#e00"/></svg></button>
        <button class="tool" aria-label="Angle snap"><svg viewBox="0 0 18 18"><path d="M16 15H2L13 3M8 8c3 1 4 4 4 7" fill="none" stroke="#999" stroke-width="2"/></svg></button>
        <button class="tool" aria-label="3D body"><svg viewBox="0 0 18 18"><path d="M9 1l6 4v8l-6 4-6-4V5z" fill="#5c9cf0" stroke="#1448a8"/><path d="M9 1l6 4-6 4-6-4z" fill="#c4e0ff"/><path d="M9 9v8M3 5l6 4 6-4" fill="none" stroke="#1448a8"/></svg></button>
        <button class="tool" aria-label="Normal to"><svg viewBox="0 0 18 18"><path d="M2 14l7-4 8 3-8 4z" fill="#58a8f0" stroke="#1458a8"/><path d="M9 13V2M6 5l3-3 3 3" fill="none" stroke="#222" stroke-width="2"/></svg></button>
        <div class="sep"></div>
    </div>

    <footer class="status">
        <span class="app">SolidWorks Premium 2014 x64 <b>版</b></span>
        <span class="cell blank"></span>
        <span class="cell">完全定义</span>
        <span class="cell blank"></span>
        <span class="cell">在编辑  装配体</span>
        <span class="cell blank"></span>
        <span class="cell blank"></span>
        <span class="cell custom">自定</span>
    </footer>
</div>

<div class="ime">
    <svg class="sogou" viewBox="0 0 28 28"><path d="M3 5l20-4q2 0 3 3l2 17q0 3-3 4L8 27q-3 0-4-3L1 9q0-3 2-4z" fill="#f4511e"/><path d="M22 7C14 5 7 7 8 11s13 2 13 6-8 5-14 3" fill="none" stroke="#fff" stroke-width="4"/></svg>
    <svg viewBox="0 0 16 16"><path d="M2 15L8 2l6 13M4 10h8" fill="none" stroke="#0a74be" stroke-width="2"/></svg>
    <svg viewBox="0 0 16 16"><path d="M11 2c5 5 1 12-5 12-3 0-5-2-5-3 6 1 11-3 10-9z" fill="#0a74be"/></svg>
    <svg viewBox="0 0 16 16"><circle cx="4" cy="5" r="2" fill="#0a74be"/><path d="M11 8c3 0 2 5-2 6l1-3z" fill="#0a74be"/></svg>
    <svg viewBox="0 0 16 16"><path d="M0 3h16v11H0z" fill="#0a74be"/><path d="M2 6h12M2 9h12" stroke="#fff" stroke-dasharray="2 1"/><path d="M4 12h8" stroke="#fff"/></svg>
    <svg viewBox="0 0 16 16"><circle cx="7" cy="4" r="3" fill="#b8b8b8"/><path d="M1 14c0-7 11-7 11 0z" fill="#b8b8b8"/><path d="M8 9h7v6H8z" fill="#fff" stroke="#999"/><path d="M10 11h4M10 13h4" stroke="#999"/></svg>
    <svg viewBox="0 0 16 16"><path d="M5 1q3 2 6 0l5 3-2 4-2-1v8H4V7L2 8 0 4z" fill="#0a74be"/></svg>
    <svg viewBox="0 0 16 16"><path d="M2 14l7-7" stroke="#0a74be" stroke-width="3"/><path d="M13 1L10 3v3h3l2-3c2 5-3 8-7 5S8 0 13 1z" fill="#0a74be"/></svg>
</div>

<div class="speed">
    <div class="ball">80%</div>
    <div class="rates">
        <p><svg viewBox="0 0 8 8"><path d="M4 8V1M1 4l3-3 3 3" fill="none" stroke="#f04040" stroke-width="2"/></svg>0.1K/s</p>
        <p><svg viewBox="0 0 8 8"><path d="M4 0v7M1 4l3 3 3-3" fill="none" stroke="#0a9a5a" stroke-width="2"/></svg>62.8K/s</p>
    </div>
    <button class="plus" aria-label="Boost"><svg viewBox="0 0 20 20"><circle cx="9" cy="11" r="8" fill="#3a78f0"/><path d="M5 11h8M9 7v8" stroke="#fff" stroke-width="2"/><circle cx="15" cy="5" r="4" fill="#f03030"/></svg></button>
</div>
</body>
</html>
```
FILE: styles.css
```css
* {
    box-sizing: border-box;
}
body {
    margin: 0;
    height: 100vh;
    overflow: hidden;
    background-color: #333;
    font-family: "Liberation Sans", "Noto Sans CJK SC", sans-serif;
    font-size: 12px;
    color: #000;
}
button {
    margin: 0;
    padding: 0;
    border: none;
    background: none;
    font: inherit;
    color: inherit;
}
a {
    color: inherit;
    text-decoration: none;
}
svg {
    display: block;
    flex: none;
}
.sprite {
    position: absolute;
    width: 0;
    height: 0;
}
.window {
    display: flex;
    flex-direction: column;
    height: 100vh;
    padding: 3px;
    border: 1px solid #444;
    border-radius: 5px;
    background-color: #efefef;
}

/* title bar */
.titlebar {
    display: flex;
    flex: none;
    height: 29px;
    border-bottom: 1px solid #000;
    background: linear-gradient(#e8e8e8, #d6d6d6);
}
.brand {
    display: flex;
    flex: none;
    align-items: center;
    width: 131px;
    margin: 0;
    padding-left: 3px;
    border-left: 5px solid #f22;
    background: linear-gradient(#4a4a4a, #2c2c2c);
    font-family: "Open Sans", sans-serif;
    font-size: 14px;
    font-weight: 400;
    color: #fff;
}
.brand b {
    font-weight: 800;
}
.ds {
    width: 24px;
    height: 22px;
    margin-right: 2px;
}
.menu {
    display: flex;
    flex: none;
    align-items: center;
    gap: 16px;
    padding: 0 5px 0 18px;
    border-right: 2px solid #888;
    background-color: #a9a9a9;
    font-family: "Noto Sans CJK SC", sans-serif;
    white-space: nowrap;
}
.menu span {
    font-family: "Open Sans", sans-serif;
    font-size: 11px;
}
.menu .latin {
    font-family: "DejaVu Sans", sans-serif;
    font-size: 11px;
}
.pin {
    width: 16px;
    height: 16px;
}
.title-actions {
    display: flex;
    flex: 1;
    align-items: center;
    justify-content: flex-end;
    gap: 3px;
}
.mini {
    width: 4px;
    height: 14px;
}
.tool {
    display: flex;
    flex: none;
    align-items: center;
    justify-content: center;
    width: 20px;
    height: 20px;
}
.tool svg {
    width: 18px;
    height: 18px;
}
.drop {
    flex: none;
    width: 10px;
    height: 10px;
}
.drop::before, .caret {
    content: "";
    display: block;
    width: 0;
    margin: auto;
    border: 3px solid transparent;
    border-top-color: #444;
    border-bottom: 0;
}

/* main toolbar */
.toolbar {
    display: flex;
    flex: none;
    align-items: center;
    gap: 3px;
    height: 32px;
    padding: 0 4px 4px;
    border-bottom: 1px solid #222;
    background-color: #dadada;
}
.sep {
    flex: none;
    width: 2px;
    height: 20px;
    margin: 0 -1px;
    border-left: 1px solid #666;
    border-right: 1px solid #f4f4f4;
}
.pressed {
    width: 22px;
    height: 22px;
    margin: 0 -1px;
    border: 1px solid #333;
    background-color: #aaa;
}

.workspace {
    display: flex;
    flex: 1;
    min-height: 0;
}
/* left panel */
.panel {
    display: flex;
    flex: none;
    flex-direction: column;
    width: 194px;
    border-right: 2px solid #333;
    background-color: #e5e5e5;
}
.command-tabs {
    display: flex;
    flex: none;
    height: 24px;
    padding-bottom: 4px;
    border-bottom: 2px solid #888;
    font-family: "Noto Sans CJK SC", sans-serif;
}
.command-tabs button {
    width: 56px;
    border-right: 2px solid #222;
    border-bottom: 2px solid #222;
    background-color: #a9a9a9;
    line-height: 16px;
}
.command-tabs .active {
    background-color: #e5e5e5;
}
.manager-tabs {
    display: flex;
    flex: none;
    gap: 2px;
    height: 24px;
    padding-top: 3px;
    border-bottom: 1px solid #222;
}
.manager-tabs button {
    display: flex;
    align-items: center;
    justify-content: center;
    width: 26px;
    border: 1px solid #222;
    border-bottom: 0;
    background-color: #a9a9a9;
}
.manager-tabs .active {
    border: none;
    background-color: #e5e5e5;
}
.manager-tabs svg {
    width: 17px;
    height: 17px;
}
.more {
    margin-left: auto;
    padding-right: 5px;
    font-size: 18px;
    line-height: 18px;
}
.filter {
    display: flex;
    flex: none;
    align-items: center;
    height: 18px;
    margin: 1px 1px 3px 0;
    padding-left: 7px;
    border: 1px solid #666;
    background-color: #f2f2f2;
}
.filter svg {
    width: 12px;
    height: 12px;
}
.filter .caret {
    margin: 0 2px;
}
.filter input {
    flex: 1;
    min-width: 0;
    height: 14px;
    padding: 0;
    border: none;
    outline: none;
    background: none;
}
.tree-frame {
    display: grid;
    flex: 1;
    grid-template-columns: 1fr 14px;
    grid-template-rows: 1fr 15px;
    min-height: 0;
}
.tree {
    min-width: 0;
    min-height: 0;
    overflow: hidden;
    font-family: "Noto Sans CJK SC", sans-serif;
}
.row {
    display: flex;
    align-items: center;
    height: 18px;
}
.row svg {
    width: 18px;
    height: 18px;
}
.row .warn {
    width: 16px;
    height: 16px;
    margin: 0 1px 0 2px;
}
.root .warn {
    margin: 0 1px 0 0;
}
.children {
    background: repeating-linear-gradient(#888 0 1px, transparent 1px 3px) 8px 0 / 1px 100% no-repeat;
}
.children .row {
    padding-left: 4px;
}
/* expander box, followed by the dotted branch */
.row button {
    flex: none;
    width: 9px;
    height: 9px;
    margin-right: 5px;
    border: 1px solid #777;
    background: linear-gradient(#000, #000) center / 5px 1px no-repeat, linear-gradient(#000, #000) center / 1px 5px no-repeat, #fff;
}
.row em {
    width: 10px;
    margin-left: 4px;
    border-top: 1px dotted #888;
}
.label {
    margin-left: 3px;
    line-height: 14px;
    white-space: pre;
}
.warn + .label {
    margin-left: 2px;
}
.label span {
    font-family: "Liberation Mono", monospace;
    font-size: 10px;
}
.olive {
    color: #808000;
}
.selected {
    background-color: #0a246a;
    color: #fff;
}
.vscroll {
    display: flex;
    flex-direction: column;
}
.hscroll {
    display: flex;
    min-width: 0;
}
.vscroll button, .hscroll button, .thumb, .corner {
    flex: none;
    border: 1px solid;
    border-color: #f4f4f4 #444 #444 #f4f4f4;
    background-color: #d0d0d0;
}
.vscroll button, .hscroll button {
    display: flex;
    align-items: center;
    justify-content: center;
    width: 14px;
    height: 15px;
}
.vscroll button::before, .hscroll button::before {
    content: "";
    border: 4px solid transparent;
}
.vscroll .up::before {
    border-top: 0;
    border-bottom-color: #000;
}
.vscroll .down::before {
    border-bottom: 0;
    border-top-color: #000;
}
.hscroll .left::before {
    border-left: 0;
    border-right-color: #000;
}
.hscroll .right::before {
    border-right: 0;
    border-left-color: #000;
}
.vscroll .thumb {
    height: 44%;
}
.hscroll .thumb {
    width: 22%;
}
.track {
    flex: 1;
    background: repeating-conic-gradient(#d0d0d0 0 25%, #f4f4f4 0 50%) 0 0 / 2px 2px;
}

/* graphics area */
.viewport {
    position: relative;
    flex: 1;
    min-width: 0;
    border-right: 1px solid #111;
    border-bottom: 1px solid #222;
    background-color: #fff;
}
.scene {
    width: 100%;
    height: 100%;
}
.triad text {
    font-family: "Liberation Serif", serif;
    font-size: 10px;
    font-weight: 700;
    stroke: none;
}
.view-tools {
    position: absolute;
    top: 4px;
    left: 171px;
    display: flex;
    align-items: center;
    gap: 5px;
}
.view-tools .tool {
    width: 18px;
}
.view-tools .drop {
    width: 9px;
}
.doc-buttons {
    position: absolute;
    top: 4px;
    right: 7px;
    display: flex;
    gap: 3px;
}
.bird {
    position: absolute;
    top: 9px;
    right: 76px;
    width: 66px;
    height: 64px;
}
.task-tabs {
    position: absolute;
    top: 59px;
    right: 0;
    display: flex;
    flex-direction: column;
    border-top: 1px solid #222;
    border-left: 1px solid #222;
}
.task-tabs button {
    display: flex;
    align-items: center;
    justify-content: center;
    width: 22px;
    height: 24px;
    border-bottom: 2px solid #222;
    background-color: #a9a9a9;
}
.task-tabs .active {
    background-color: #f0f0f0;
}
.task-tabs svg {
    width: 17px;
    height: 17px;
}
.splitter {
    position: absolute;
    top: 335px;
    left: -2px;
    display: flex;
    flex-direction: column;
    align-items: center;
    justify-content: space-evenly;
    width: 10px;
    height: 39px;
    border: 1px solid #222;
    border-left: 0;
    background-color: #e5e5e5;
}
.splitter i {
    border: 3px solid transparent;
    border-left: 0;
    border-right-color: #333;
}

/* bottom bars */
.model-tabs {
    display: flex;
    flex: none;
    height: 16px;
    padding: 1px 0 1px 1px;
    background-color: #e5e5e5;
}
.step {
    display: flex;
    align-items: center;
    justify-content: center;
    width: 16px;
    border: 1px solid #999;
    background-color: #c4c4c4;
}
.step svg {
    width: 9px;
    height: 9px;
    fill: #999;
    stroke: #999;
}
.tab {
    padding: 0 9px;
    border-right: 2px solid #222;
    border-bottom: 2px solid #222;
    background-color: #a9a9a9;
    font-family: "Noto Sans CJK SC", sans-serif;
    line-height: 12px;
    white-space: pre;
}
.tab.active {
    margin-left: 3px;
    border-left: 1px solid #222;
    background-color: #e5e5e5;
}
.sketchbar {
    display: flex;
    flex: none;
    align-items: center;
    gap: 5px;
    height: 29px;
    padding-left: 7px;
    background-color: #dadada;
}
.sketchbar .tool {
    width: 18px;
}
.sketchbar .sep {
    height: 26px;
    margin: 0 1px 0 2px;
    border-left-color: #888;
}
.grip {
    width: 2px;
    height: 20px;
    border-left: 2px dotted #777;
}
.status {
    display: flex;
    flex: none;
    gap: 3px;
    height: 20px;
    border-top: 2px solid #999;
    background-color: #cfcfcf;
    font-family: "Noto Sans CJK SC", sans-serif;
    line-height: 15px;
    white-space: pre;
}
.app {
    flex: 1;
    padding-left: 2px;
    font-family: "Liberation Mono", monospace;
    font-size: 10px;
}
.app b {
    font-family: "Noto Sans CJK SC", sans-serif;
    font-size: 12px;
    font-weight: 400;
}
.cell {
    padding: 0 5px 0 1px;
    border: 1px solid;
    border-color: #888 #f0f0f0 #f0f0f0 #888;
}
.blank {
    width: 6px;
    padding: 0;
}
.custom {
    width: 184px;
    padding-left: 22px;
}

/* floating widgets */
.ime {
    position: absolute;
    top: 761px;
    right: 0;
    display: flex;
    align-items: center;
    gap: 6px;
    height: 23px;
    border-top: 1px solid #bbb;
    border-bottom: 1px solid #bbb;
    background-color: #fff;
}
.ime svg {
    width: 16px;
    height: 16px;
}
.ime .sogou {
    width: 28px;
    height: 28px;
}
.speed {
    position: absolute;
    right: 16px;
    bottom: 0;
    display: flex;
    align-items: center;
    height: 37px;
    padding-right: 2px;
    border: 1px solid #999;
    border-bottom: 0;
    border-radius: 18px 18px 8px 0;
    background: linear-gradient(#fafafa, #dcdcdc);
}
.ball {
    width: 48px;
    height: 48px;
    border: 3px solid #eee;
    border-radius: 50%;
    outline: 1px solid #888;
    background: linear-gradient(#d84a18, #ff8a60 40%, #ffa41c 60%);
    font-family: "DejaVu Sans", sans-serif;
    font-size: 14px;
    line-height: 40px;
    text-align: center;
    color: #fff;
}
.rates {
    width: 52px;
    font-family: "Open Sans", sans-serif;
    font-size: 10px;
}
.rates p {
    display: flex;
    align-items: center;
    justify-content: space-between;
    margin: 0;
    padding-left: 4px;
    line-height: 14px;
}
.rates svg {
    width: 8px;
    height: 8px;
}
.plus svg {
    width: 20px;
    height: 20px;
    margin-left: 3px;
}
```
